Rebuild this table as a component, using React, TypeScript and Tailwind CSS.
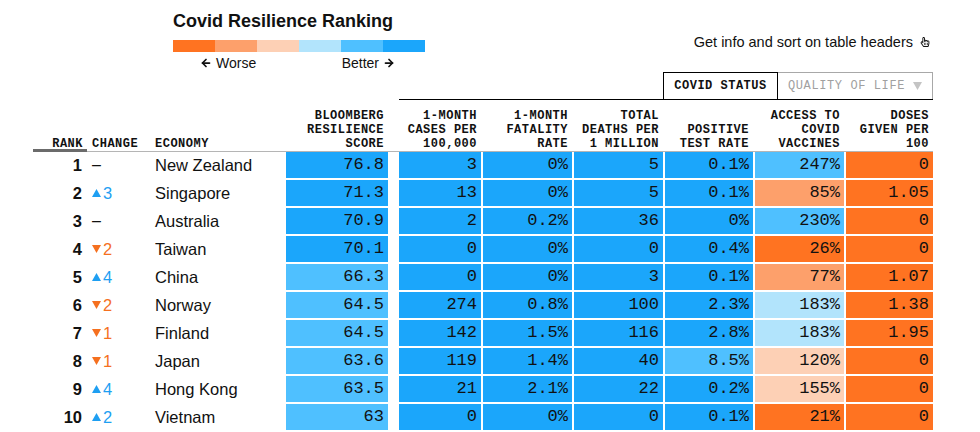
import { ArrowLeft, ArrowRight } from "lucide-react";
import { FaRegHandPointer } from "react-icons/fa";

type Shade = "do" | "mo" | "lo" | "lb" | "mb" | "db";

const shades: Record<Shade, string> = {
  do: "bg-[#ff7321]",
  mo: "bg-[#fda06b]",
  lo: "bg-[#fdd0b5]",
  lb: "bg-[#b2e4fc]",
  mb: "bg-[#4fc0ff]",
  db: "bg-[#1ba6fb]",
};

const legend: Shade[] = ["do", "mo", "lo", "lb", "mb", "db"];

interface Row {
  rank: number;
  change: number; // positive = up, negative = down, 0 = none
  economy: string;
  score: [string, Shade];
  cells: [string, Shade][];
}

const rows: Row[] = [
  { rank: 1, change: 0, economy: "New Zealand", score: ["76.8", "db"], cells: [["3", "db"], ["0%", "db"], ["5", "db"], ["0.1%", "db"], ["247%", "mb"], ["0", "do"]] },
  { rank: 2, change: 3, economy: "Singapore", score: ["71.3", "db"], cells: [["13", "db"], ["0%", "db"], ["5", "db"], ["0.1%", "db"], ["85%", "mo"], ["1.05", "do"]] },
  { rank: 3, change: 0, economy: "Australia", score: ["70.9", "db"], cells: [["2", "db"], ["0.2%", "db"], ["36", "db"], ["0%", "db"], ["230%", "mb"], ["0", "do"]] },
  { rank: 4, change: -2, economy: "Taiwan", score: ["70.1", "db"], cells: [["0", "db"], ["0%", "db"], ["0", "db"], ["0.4%", "db"], ["26%", "do"], ["0", "do"]] },
  { rank: 5, change: 4, economy: "China", score: ["66.3", "mb"], cells: [["0", "db"], ["0%", "db"], ["3", "db"], ["0.1%", "db"], ["77%", "mo"], ["1.07", "do"]] },
  { rank: 6, change: -2, economy: "Norway", score: ["64.5", "mb"], cells: [["274", "db"], ["0.8%", "db"], ["100", "db"], ["2.3%", "db"], ["183%", "lb"], ["1.38", "do"]] },
  { rank: 7, change: -1, economy: "Finland", score: ["64.5", "mb"], cells: [["142", "db"], ["1.5%", "db"], ["116", "db"], ["2.8%", "db"], ["183%", "lb"], ["1.95", "do"]] },
  { rank: 8, change: -1, economy: "Japan", score: ["63.6", "mb"], cells: [["119", "db"], ["1.4%", "db"], ["40", "db"], ["8.5%", "mb"], ["120%", "lo"], ["0", "do"]] },
  { rank: 9, change: 4, economy: "Hong Kong", score: ["63.5", "mb"], cells: [["21", "db"], ["2.1%", "db"], ["22", "db"], ["0.2%", "db"], ["155%", "lo"], ["0", "do"]] },
  { rank: 10, change: 2, economy: "Vietnam", score: ["63", "mb"], cells: [["0", "db"], ["0%", "db"], ["0", "db"], ["0.1%", "db"], ["21%", "do"], ["0", "do"]] },
];

const groupHeaders: string[][] = [
  ["1-MONTH", "CASES PER", "100,000"],
  ["1-MONTH", "FATALITY", "RATE"],
  ["TOTAL", "DEATHS PER", "1 MILLION"],
  ["POSITIVE", "TEST RATE"],
  ["ACCESS TO", "COVID", "VACCINES"],
  ["DOSES", "GIVEN PER", "100"],
];

const mono = "font-['Liberation_Mono',monospace]";
const headText = `${mono} text-[12px] font-bold leading-[14px] tracking-[0.5px] text-[#111]`;

const Change = ({ value }: { value: number }) => {
  if (value === 0) return <span className="text-[16px]">–</span>;
  const up = value > 0;
  return (
    <span className={`flex items-center gap-[2px] ${up ? "text-[#1e9ff2]" : "text-[#f5701f]"}`}>
      <svg width="9" height="8" viewBox="0 0 9 8" className="fill-current">
        {up ? <polygon points="4.5,0 9,8 0,8" /> : <polygon points="0,0 9,0 4.5,8" />}
      </svg>
      <span className="text-[16.5px]">{Math.abs(value)}</span>
    </span>
  );
};

export default function App() {
  return (
    <div className="w-[980px] h-[432px] overflow-hidden bg-white text-[#111] font-['Liberation_Sans',Arial,sans-serif]">
      {/* Title, legend and tabs */}
      <div className="flex h-[99px]">
        <div className="pl-[173px] pt-[9px] flex-1">
          <h1 className="text-[18px] font-bold leading-[24px]">Covid Resilience Ranking</h1>
          <div className="mt-[7px] flex w-[252px] h-[12px]">
            {legend.map((s) => (
              <div key={s} className={`flex-1 ${shades[s]}`} />
            ))}
          </div>
          <div className="flex w-[252px] justify-between pl-[27px] pr-[30px] mt-[1px] text-[14px] leading-[20px]">
            <span className="flex items-center gap-[4px]">
              <ArrowLeft size={12} strokeWidth={3.5} />
              Worse
            </span>
            <span className="flex items-center gap-[4px]">
              Better
              <ArrowRight size={12} strokeWidth={3.5} />
            </span>
          </div>
        </div>
        <div className="flex flex-col items-end pr-[47px]">
          <div className="pt-[33px] pr-[3px] flex items-center text-[14.5px] leading-[18px]">
            Get info and sort on table headers
            <FaRegHandPointer size={10} className="ml-[7px]" />
          </div>
          <div className="mt-[21px] flex h-[27px]">
            <div className={`w-[115px] border-t border-x border-black flex items-center justify-center ${mono} text-[12px] font-bold tracking-[0.5px]`}>
              COVID STATUS
            </div>
            <div className={`w-[155px] border-t border-r border-[#a8a8a8] flex items-center justify-center gap-[8px] ${mono} text-[12px] tracking-[0.6px] text-[#a0a0a0]`}>
              QUALITY OF LIFE
              <svg width="9" height="8" viewBox="0 0 9 8" className="fill-[#c4c4c4]">
                <polygon points="0,0 9,0 4.5,8" />
              </svg>
            </div>
          </div>
        </div>
      </div>

      {/* Table */}
      <div className="ml-[33px] grid grid-cols-[54px_68px_131px_102px_11px_82px_91px_91px_90px_91px_89px]">
        <div className={`flex items-end justify-end pr-[4px] border-b border-[#6b6b6b] shadow-[inset_0_-2px_0_#6b6b6b] ${headText}`}>RANK</div>
        <div className={`flex items-end pl-[5px] border-b border-[#b5b5b5] ${headText}`}>CHANGE</div>
        <div className={`flex items-end border-b border-[#b5b5b5] ${headText}`}>ECONOMY</div>
        <div className={`flex items-end justify-end text-right pr-[4px] border-b border-[#b5b5b5] ${headText}`}>
          BLOOMBERG<br />RESILIENCE<br />SCORE
        </div>
        <div className="border-b border-[#b5b5b5]" />
        {groupHeaders.map((lines, i) => (
          <div key={i} className={`h-[53px] flex items-end justify-end text-right pr-[4px] border-t border-t-black border-b border-b-[#b5b5b5] ${headText}`}>
            <div>
              {lines.map((l, j) => (
                <div key={j}>{l}</div>
              ))}
            </div>
          </div>
        ))}

        {rows.map((r) => (
          <div key={r.rank} className="contents">
            <div className="h-[28px] border-b-2 border-white flex items-center justify-end pr-[5px] text-[16.5px] font-bold">{r.rank}</div>
            <div className="h-[28px] border-b-2 border-white flex items-center pl-[5px]">
              <Change value={r.change} />
            </div>
            <div className="h-[28px] border-b-2 border-white flex items-center text-[16.5px]">{r.economy}</div>
            <div className={`h-[28px] border-b-2 border-white flex items-center justify-end pr-[4px] ${mono} text-[17px] ${shades[r.score[1]]}`}>
              {r.score[0]}
            </div>
            <div className="h-[28px]" />
            {r.cells.map(([v, s], i) => (
              <div
                key={i}
                className={`h-[28px] border-b-2 border-white flex items-center justify-end pr-[4px] ${mono} text-[17px] ${shades[s]} ${i > 0 ? "border-l-2" : ""}`}
              >
                {v}
              </div>
            ))}
          </div>
        ))}
      </div>
    </div>
  );
}
